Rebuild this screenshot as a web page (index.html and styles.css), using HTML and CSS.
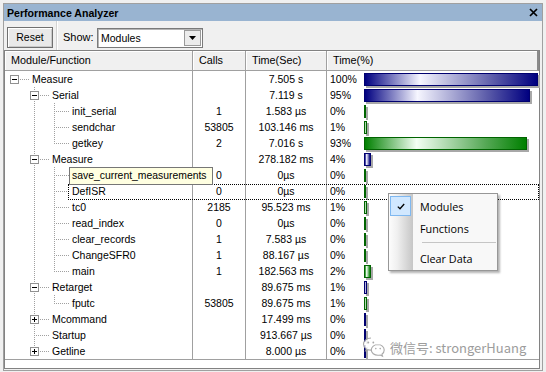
FILE: index.html
```html
<!DOCTYPE html>
<html>
<head>
<meta charset="utf-8">
<link rel="stylesheet" href="styles.css">
</head>
<body>
<div class="win">
  <div class="title">
    <span class="ttext">Performance Analyzer</span>
    <svg class="close" width="9" height="9" viewBox="0 0 9 9"><path d="M1 1L8 8M8 1L1 8" stroke="#000" stroke-width="1.7"/></svg>
  </div>
  <div class="toolbar">
    <div class="btn">Reset</div>
    <div class="sep"></div>
    <div class="lbl">Show:</div>
    <div class="combo">
      <span class="ctext">Modules</span>
      <span class="cbtn"><svg width="7" height="4" viewBox="0 0 7 4"><path d="M0 0H7L3.5 4Z" fill="#000"/></svg></span>
    </div>
  </div>
  <div class="grid">
    <div class="head">
      <div class="hc">Module/Function</div>
      <div class="hc">Calls</div>
      <div class="hc">Time(Sec)</div>
      <div class="hc last">Time(%)</div>
    </div>
    <div class="rows">
      <div class="row">
        <div class="c name"><i class="s r"><b class="box"></b></i><span class="tx">Measure</span></div>
        <div class="c num"></div><div class="c num">7.505 s</div>
        <div class="c pct"><span class="p">100%</span><span class="bar b" style="width:174px"></span></div>
      </div>
      <div class="row">
        <div class="c name"><i class="s"></i><i class="s t"><b class="box"></b></i><span class="tx">Serial</span></div>
        <div class="c num"></div><div class="c num">7.119 s</div>
        <div class="c pct"><span class="p">95%</span><span class="bar b" style="width:166px"></span></div>
      </div>
      <div class="row">
        <div class="c name"><i class="s"></i><i class="s v"></i><i class="s t"></i><span class="tx">init_serial</span></div>
        <div class="c num">1</div><div class="c num">1.583 µs</div>
        <div class="c pct"><span class="p">0%</span><span class="bar g" style="width:2px"></span></div>
      </div>
      <div class="row">
        <div class="c name"><i class="s"></i><i class="s v"></i><i class="s t"></i><span class="tx">sendchar</span></div>
        <div class="c num">53805</div><div class="c num">103.146 ms</div>
        <div class="c pct"><span class="p">1%</span><span class="bar g" style="width:3px"></span></div>
      </div>
      <div class="row">
        <div class="c name"><i class="s"></i><i class="s v"></i><i class="s l"></i><span class="tx">getkey</span></div>
        <div class="c num">2</div><div class="c num">7.016 s</div>
        <div class="c pct"><span class="p">93%</span><span class="bar g" style="width:163px"></span></div>
      </div>
      <div class="row">
        <div class="c name"><i class="s"></i><i class="s t"><b class="box"></b></i><span class="tx">Measure</span></div>
        <div class="c num"></div><div class="c num">278.182 ms</div>
        <div class="c pct"><span class="p">4%</span><span class="bar b" style="width:7px"></span></div>
      </div>
      <div class="row">
        <div class="c name open"><i class="s"></i><i class="s v"></i><i class="s t"></i><span class="tx">save_current_</span></div>
        <div class="c num">0</div><div class="c num">0µs</div>
        <div class="c pct"><span class="p">0%</span><span class="bar g" style="width:2px"></span></div>
        <div class="tip">save_current_measurements</div>
      </div>
      <div class="row">
        <div class="c name"><i class="s"></i><i class="s v"></i><i class="s t"></i><span class="tx">DefISR</span></div>
        <div class="c num">0</div><div class="c num">0µs</div>
        <div class="c pct"><span class="p">0%</span><span class="bar g" style="width:2px"></span></div>
        <div class="focus"></div>
      </div>
      <div class="row">
        <div class="c name"><i class="s"></i><i class="s v"></i><i class="s t"></i><span class="tx">tc0</span></div>
        <div class="c num">2185</div><div class="c num">95.523 ms</div>
        <div class="c pct"><span class="p">1%</span><span class="bar g" style="width:3px"></span></div>
      </div>
      <div class="row">
        <div class="c name"><i class="s"></i><i class="s v"></i><i class="s t"></i><span class="tx">read_index</span></div>
        <div class="c num">0</div><div class="c num">0µs</div>
        <div class="c pct"><span class="p">0%</span><span class="bar g" style="width:2px"></span></div>
      </div>
      <div class="row">
        <div class="c name"><i class="s"></i><i class="s v"></i><i class="s t"></i><span class="tx">clear_records</span></div>
        <div class="c num">1</div><div class="c num">7.583 µs</div>
        <div class="c pct"><span class="p">0%</span><span class="bar g" style="width:2px"></span></div>
      </div>
      <div class="row">
        <div class="c name"><i class="s"></i><i class="s v"></i><i class="s t"></i><span class="tx">ChangeSFR0</span></div>
        <div class="c num">1</div><div class="c num">88.167 µs</div>
        <div class="c pct"><span class="p">0%</span><span class="bar g" style="width:2px"></span></div>
      </div>
      <div class="row">
        <div class="c name"><i class="s"></i><i class="s v"></i><i class="s l"></i><span class="tx">main</span></div>
        <div class="c num">1</div><div class="c num">182.563 ms</div>
        <div class="c pct"><span class="p">2%</span><span class="bar g" style="width:7px"></span></div>
      </div>
      <div class="row">
        <div class="c name"><i class="s"></i><i class="s t"><b class="box"></b></i><span class="tx">Retarget</span></div>
        <div class="c num"></div><div class="c num">89.675 ms</div>
        <div class="c pct"><span class="p">1%</span><span class="bar b" style="width:3px"></span></div>
      </div>
      <div class="row">
        <div class="c name"><i class="s"></i><i class="s v"></i><i class="s l"></i><span class="tx">fputc</span></div>
        <div class="c num">53805</div><div class="c num">89.675 ms</div>
        <div class="c pct"><span class="p">1%</span><span class="bar g" style="width:3px"></span></div>
      </div>
      <div class="row">
        <div class="c name"><i class="s"></i><i class="s t"><b class="box p"></b></i><span class="tx">Mcommand</span></div>
        <div class="c num"></div><div class="c num">17.499 ms</div>
        <div class="c pct"><span class="p">0%</span><span class="bar b" style="width:2px"></span></div>
      </div>
      <div class="row">
        <div class="c name"><i class="s"></i><i class="s t"></i><span class="tx">Startup</span></div>
        <div class="c num"></div><div class="c num">913.667 µs</div>
        <div class="c pct"><span class="p">0%</span><span class="bar b" style="width:2px"></span></div>
      </div>
      <div class="row">
        <div class="c name"><i class="s"></i><i class="s l"><b class="box p"></b></i><span class="tx">Getline</span></div>
        <div class="c num"></div><div class="c num">8.000 µs</div>
        <div class="c pct"><span class="p">0%</span><span class="bar b" style="width:2px"></span></div>
      </div>

      <div class="menu">
        <div class="mi"><span class="chk"><svg width="8" height="7" viewBox="0 0 8 7"><path d="M0.8 3.6L3 5.8L7.2 1" fill="none" stroke="#000" stroke-width="1.3"/></svg></span><span>Modules</span></div>
        <div class="mi"><span class="chk none"></span><span>Functions</span></div>
        <div class="msep"></div>
        <div class="mi"><span class="chk none"></span><span>Clear Data</span></div>
      </div>

      <div class="wm">
        <svg width="24" height="22" viewBox="0 0 24 22">
          <g fill="#fff" stroke="#9a9a9a" stroke-width="1.1">
            <path d="M9 2C4.6 2 1.5 4.8 1.5 8.2c0 2 1 3.6 2.7 4.7L3.5 15l2.6-1.3c0.9 0.3 1.9 0.4 2.9 0.4 0.3 0 0.6 0 0.9 0"/>
            <path d="M16 8.5c-3.8 0-6.7 2.4-6.7 5.4s2.9 5.4 6.7 5.4c0.8 0 1.6-0.1 2.3-0.3l2.2 1.2-0.6-1.9c1.4-1 2.3-2.6 2.3-4.4 0-3-2.9-5.4-6.2-5.4z"/>
          </g>
          <g fill="#9a9a9a">
            <circle cx="6.3" cy="6.5" r="0.9"/><circle cx="11.3" cy="6.5" r="0.9"/>
            <circle cx="13.8" cy="12.6" r="0.8"/><circle cx="18.2" cy="12.6" r="0.8"/>
          </g>
        </svg>
        <span class="wmt">微信号: strongerHuang</span>
      </div>
    </div>
    <div class="filler"></div>
  </div>
</div>
</body>
</html>
```
FILE: styles.css
```css
* { box-sizing: border-box; }
html, body { margin: 0; padding: 0; }
body {
  width: 546px; height: 372px; overflow: hidden;
  background: #f0f0f0;
  font-family: "Liberation Sans", Arial, sans-serif;
  font-size: 10.5px; color: #000;
}
.win {
  margin: 3px 0 0 3px;
  width: 540px; height: 368px;
  border: 1px solid #a0a0a0;
  background: #f0f0f0;
  display: flex; flex-direction: column;
}
.title {
  height: 17px; flex: none;
  background: #99b4d1;
  display: flex; align-items: center;
  padding: 0 4px 0 3px;
}
.ttext { font-weight: bold; font-size: 10.6px; }
.close { margin-left: auto; }

.toolbar {
  height: 29px; flex: none;
  display: flex; align-items: flex-start;
  padding-left: 3px;
}
.btn {
  margin-top: 6px;
  width: 46px; height: 21px;
  border: 1px solid #707070;
  background: #e9e9e9;
  box-shadow: inset 1px 1px 0 #fff, inset -1px -1px 0 #c9c9c9;
  display: flex; align-items: center; justify-content: center;
  padding-bottom: 1px;
}
.sep {
  margin-left: 3px;
  width: 2px; height: 29px;
  border-left: 1px solid #d3d3d3;
  border-right: 1px solid #fff;
}
.lbl {
  margin-left: 5px; margin-top: 7px;
  width: 34px; line-height: 19px;
  font-size: 11px;
}
.combo {
  margin-top: 7px;
  width: 106px; height: 20px;
  border: 1px solid #7a7a7a;
  box-shadow: inset 1px 1px 0 #b5b5b5;
  background: #fff;
  display: flex; align-items: center;
  padding: 0 1px 0 3px;
}
.ctext { flex: 1; }
.cbtn {
  width: 17px; height: 16px;
  border: 1px solid #9a9a9a;
  background: #ececec;
  display: flex; align-items: center; justify-content: center;
}

.grid {
  width: 536px; height: 319px;
  border: 1px solid #828282;
  background: #fff;
  display: flex; flex-direction: column;
}
.head, .row {
  display: grid;
  grid-template-columns: 188px 53px 81px 1fr;
}
.head { height: 20px; flex: none; }
.hc {
  background: #f0f0f0;
  border-right: 1px solid #a0a0a0;
  border-bottom: 1px solid #a0a0a0;
  box-shadow: inset 1px 1px 0 #fff;
  padding-left: 6px;
  line-height: 19px;
  font-size: 10.8px;
  white-space: nowrap;
}
.hc.last { border-right: 2px solid #8a8a8a; }

.rows { position: relative; flex: none; }
.row { height: 16px; position: relative; }
.c {
  border-right: 1px solid #a0a0a0;
  line-height: 16px;
  white-space: nowrap;
  overflow: hidden;
}
.c.pct { border-right: none; display: flex; align-items: flex-start; overflow: visible; }
.num { text-align: center; }
.name { display: flex; }
.tx { margin-left: 7px; }
.p { width: 37px; padding-left: 3px; flex: none; }

.s { width: 20px; flex: none; position: relative; }
.s.v::before, .s.t::before, .s.l::before {
  content: ""; position: absolute; left: 9px; top: 0; width: 1px; height: 16px;
  background: repeating-linear-gradient(to bottom, #a0a0a0 0 1px, transparent 1px 2px);
}
.s.l::before { height: 9px; }
.s.t::after, .s.l::after, .s.r::after {
  content: ""; position: absolute; left: 9px; top: 8px; width: 15px; height: 1px;
  background: repeating-linear-gradient(to right, #a0a0a0 0 1px, transparent 1px 2px);
}
.box {
  position: absolute; left: 5px; top: 4px; width: 9px; height: 9px;
  border: 1px solid #919191; background: #fff; z-index: 1;
}
.box::before {
  content: ""; position: absolute; left: 1px; top: 3px; width: 5px; height: 1px; background: #000;
}
.box.p::after {
  content: ""; position: absolute; left: 3px; top: 1px; width: 1px; height: 5px; background: #000;
}

.bar {
  flex: none;
  margin-top: 2px; height: 13px;
  box-shadow: 2px 2px 0 #a8a8a8;
}
.bar.b {
  border: 1px solid #000070;
  background: linear-gradient(to right, #000080 0%, #f6f6ff 32%, #5a5aa8 75%, #000080 100%);
}
.bar.g {
  border: 1px solid #006400;
  background: linear-gradient(to right, #008000 0%, #f4fff4 32%, #55a855 75%, #008000 100%);
}

.tip {
  position: absolute; left: 64px; top: 0; z-index: 3;
  width: 144px; height: 18px;
  background: #ffffe1;
  border: 1px solid #767676;
  padding-left: 2px;
  line-height: 16px;
  font-size: 10.4px;
  white-space: nowrap;
}
.focus {
  position: absolute; left: 63px; right: 0; top: 1px; height: 16px;
  border: 1px dotted #000; z-index: 2;
}

.menu {
  position: absolute; left: 383px; top: 122px; z-index: 4;
  width: 110px; height: 78px;
  border: 1px solid #979797;
  background: #f8f8f8 linear-gradient(to right, #fbfbfb 1px, #f0f0f0 8px, #c6c6c6 24px, #f8f8f8 24px);
  box-shadow: 2px 2px 2px rgba(0,0,0,0.3);
  padding: 1px 0;
  font-family: "Open Sans", "Liberation Sans", sans-serif;
  font-size: 10.8px;
}
.mi { height: 22px; display: flex; align-items: center; }
.chk {
  width: 21px; height: 20px; margin: 0 9px 0 1px;
  display: flex; align-items: center; justify-content: center;
  background: #d1e8ff; border: 1px solid #7fb8f0;
}
.chk.none { background: none; border-color: transparent; }
.msep { height: 8px; position: relative; margin-left: 33px; margin-right: 1px; }
.msep::before { content: ""; position: absolute; left: 0; right: 0; top: 3px; height: 1px; background: #c5c5c5; }

.wm {
  position: absolute; left: 357px; top: 265px; z-index: 5;
  display: flex; align-items: center; gap: 4px;
  opacity: 0.85;
}
.wmt {
  font-family: "Noto Sans CJK SC", "Noto Sans", sans-serif;
  font-size: 13px; color: #8c8c8c;
  text-shadow: 0 0 2px #fff, 0 0 2px #fff;
}
.filler {
  flex: 1;
  border-top: 1px solid #a0a0a0;
  background: #fff;
}
```
